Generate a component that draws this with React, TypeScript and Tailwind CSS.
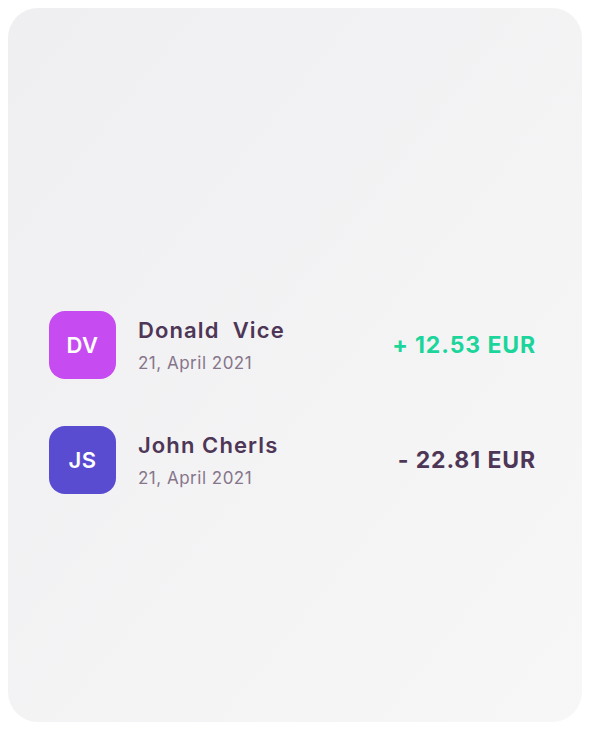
import React from "react";

const rows = [
  { initials: "DV", bg: "bg-[#c64cf1]", name: "Donald\u00a0\u00a0Vice", date: "21, April 2021", amount: "+ 12.53 EUR", amountColor: "text-[#1bd59b]" },
  { initials: "JS", bg: "bg-[#5a4cd1]", name: "John Cherls", date: "21, April 2021", amount: "- 22.81 EUR", amountColor: "text-[#4d3656]" },
];

export default function App() {
  return (
    <div className="w-[590px] h-[730px] bg-white p-2" style={{ fontFamily: 'Inter, sans-serif' }}>
      <div className="w-[574px] h-[714px] rounded-[30px] bg-gradient-to-br from-[#efeef0] to-[#f8f7f8] pt-[303px] pl-[41px] pr-[46px] flex flex-col gap-[47px]">
        {rows.map((r) => (
          <div key={r.initials} className="flex items-center h-[68px]">
            <div className={`w-[67px] h-[68px] rounded-[16px] ${r.bg} flex items-center justify-center text-white text-[22px] font-semibold tracking-[0.5px]`}>
              {r.initials}
            </div>
            <div className="ml-[22px] flex flex-col mt-[1px]">
              <div className="text-[22px] leading-[26px] font-semibold tracking-[1.1px] text-[#4d3656]">{r.name}</div>
              <div className="text-[17px] leading-[22px] mt-[9px] tracking-[0.5px] text-[#85768b]">{r.date}</div>
            </div>
            <div className={`ml-auto text-[23px] font-bold tracking-[0.9px] ${r.amountColor}`}>{r.amount}</div>
          </div>
        ))}
      </div>
    </div>
  );
}
